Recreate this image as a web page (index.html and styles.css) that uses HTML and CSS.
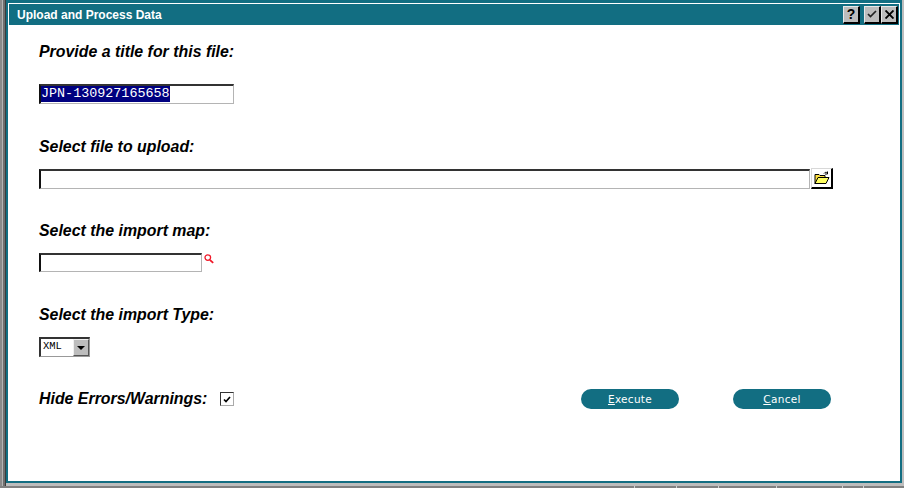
FILE: index.html
```html
<!DOCTYPE html>
<html lang="en">
<head>
    <meta charset="UTF-8">
    <title>Upload and Process Data</title>
    <link rel="stylesheet" href="styles.css">
</head>
<body>
    <div class="desktop">
        <div class="edge"></div>
        <div class="window">
            <div class="window-inner">
                <div class="title-bar">
                    <span class="title-text">Upload and Process Data</span>
                    <div class="title-buttons">
                        <button class="win-btn help-btn" type="button">?</button>
                        <button class="win-btn" type="button">
                            <svg width="10" height="8" viewBox="0 0 10 8"><path d="M1 4l2.500 2.500 5.500-5.500" fill="none" stroke="#222" stroke-width="1.700"/></svg>
                        </button>
                        <button class="win-btn" type="button">
                            <svg width="9" height="9" viewBox="0 0 9 9"><path d="M.5 .5l8 8M8.500 .5l-8 8" fill="none" stroke="#000" stroke-width="1.900"/></svg>
                        </button>
                    </div>
                </div>

                <form class="upload-form">
                    <div class="field first">
                        <label class="field-label">Provide a title for this file:</label>
                        <div class="text-box title-box"><span class="selected-text">JPN-130927165658</span></div>
                    </div>

                    <div class="field second">
                        <label class="field-label">Select file to upload:</label>
                        <div class="control-row">
                            <div class="text-box file-box"></div>
                            <button class="folder-btn" type="button">
                                <svg width="16" height="14" viewBox="0 0 16 14">
                                    <path d="M1 3.500h4l1 1h5v2H5L1 12.500z" fill="#ffe040" stroke="#000" stroke-width="1"/>
                                    <path d="M1 12.500l3-6h11l-3 6z" fill="#ffff60" stroke="#000" stroke-width="1"/>
                                    <path d="M10 2.500c1-1.500 2.500-1.500 3.500-.5M13.500 .5v2.500h-2.500" fill="none" stroke="#000" stroke-width="1"/>
                                </svg>
                            </button>
                        </div>
                    </div>

                    <div class="field">
                        <label class="field-label">Select the import map:</label>
                        <div class="map-row">
                            <div class="text-box map-box"></div>
                            <svg class="search-icon" width="10" height="10" viewBox="0 0 10 10">
                                <circle cx="3.800" cy="3.600" r="2.800" fill="none" stroke="#f01828" stroke-width="1.300"/>
                                <path d="M5.800 5.800l3.400 3" fill="none" stroke="#f01828" stroke-width="1.800"/>
                            </svg>
                        </div>
                    </div>

                    <div class="field fourth">
                        <label class="field-label">Select the import Type:</label>
                        <div class="select-box">
                            <span class="select-value">XML</span>
                            <span class="select-arrow"><span class="arrow-down"></span></span>
                        </div>
                    </div>

                    <div class="action-row">
                        <label class="field-label">Hide Errors/Warnings:</label>
                        <span class="check-box">
                            <svg width="8" height="7" viewBox="0 0 8 7"><path d="M1 3.500l2 2 4-4.500" fill="none" stroke="#000" stroke-width="1.700"/></svg>
                        </span>
                        <button class="pill-btn execute-btn" type="button"><u>E</u>xecute</button>
                        <button class="pill-btn" type="button"><u>C</u>ancel</button>
                    </div>
                </form>
            </div>
        </div>
    </div>
    <div class="status-strip">
        <span class="strip-cell grow"></span>
        <span class="strip-cell w42"></span>
        <span class="strip-cell w42"></span>
        <span class="strip-cell w58"></span>
        <span class="strip-cell w66"></span>
        <span class="strip-cell w21"></span>
        <span class="strip-cell w41"></span>
    </div>
</body>
</html>
```

FILE: styles.css
```css
:root {
    --teal: #126e82;
    --chrome: #bdbdbd;
}

html, body {
    margin: 0;
    padding: 0;
    height: 488px;
    overflow: hidden;
    background-color: var(--chrome);
}

body {
    display: flex;
    flex-direction: column;
    font-family: "Liberation Sans", Arial, sans-serif;
}

.desktop {
    display: flex;
    height: 486px;
}

/* grey stripes at the left side of the screen */
.edge {
    width: 6px;
    background: linear-gradient(90deg, #8a8a8a 0, #8a8a8a 2px, #b4b4b4 2px, #b4b4b4 3px, #6e6e6e 3px, #6e6e6e 5px, #3c3c3c 5px);
}

.window {
    width: 896px;
    height: 483px;
    box-sizing: border-box;
    border: 2px solid var(--teal);
    border-top-width: 3px;
    background-color: #fff;
}

.window-inner {
    height: 100%;
    box-sizing: border-box;
    padding: 1px 1px 0 1px;
}

/* --- Title bar --- */
.title-bar {
    display: flex;
    align-items: center;
    justify-content: space-between;
    height: 21px;
    padding: 0 1px 0 8px;
    background-color: var(--teal);
}

.title-text {
    color: #fff;
    font-size: 12px;
    font-weight: bold;
}

.title-buttons {
    display: flex;
    align-items: center;
}

.win-btn {
    display: flex;
    align-items: center;
    justify-content: center;
    width: 17px;
    height: 18px;
    padding: 0;
    box-sizing: border-box;
    background-color: var(--chrome);
    border-style: solid;
    border-width: 1px 2px 2px 1px;
    border-color: #e8e8e8 #000 #000 #e8e8e8;
}

.help-btn {
    margin-right: 4px;
    font-family: "Liberation Sans", Arial, sans-serif;
    font-size: 14px;
    font-weight: bold;
    color: #000;
}

/* --- Form --- */
.upload-form {
    padding-left: 30px;
}

.field {
    margin-top: 33px;
}

.field.first {
    margin-top: 18px;
}

.field.second {
    margin-top: 34px;
}

.field.fourth {
    margin-top: 34px;
}

.field-label {
    display: block;
    font-size: 15.900px;
    line-height: 18px;
    font-weight: bold;
    font-style: italic;
    color: #000;
}

.text-box {
    box-sizing: border-box;
    background-color: #fff;
    border-style: solid;
    border-width: 2px 1px 1px 2px;
    border-color: #333 #b4b4b4 #b4b4b4 #111;
}

.title-box {
    width: 195px;
    height: 20px;
    margin-top: 23px;
    line-height: 16px;
    font-family: "Liberation Mono", monospace;
    font-size: 13.400px;
    color: #fff;
}

.selected-text {
    display: inline-block;
    height: 16px;
    background-color: #000080;
}

.control-row {
    display: flex;
    align-items: center;
    margin-top: 12px;
}

.file-box {
    width: 771px;
    height: 20px;
}

.folder-btn {
    display: flex;
    align-items: center;
    justify-content: center;
    width: 22px;
    height: 21px;
    margin-left: 1px;
    padding: 0;
    box-sizing: border-box;
    background-color: #fff;
    border-style: solid;
    border-width: 1px 2px 2px 1px;
    border-color: #d8d8d8 #000 #000 #d8d8d8;
}

.map-row {
    display: flex;
    align-items: flex-start;
    margin-top: 13px;
}

.map-box {
    width: 163px;
    height: 19px;
}

.search-icon {
    margin-left: 2px;
    margin-top: 1px;
}

.select-box {
    display: flex;
    width: 51px;
    height: 20px;
    margin-top: 13px;
    box-sizing: border-box;
    border-style: solid;
    border-width: 2px 1px 1px 2px;
    border-color: #333 #999 #999 #333;
    background-color: #fff;
}

.select-value {
    flex: 1;
    padding-left: 2px;
    font-family: "Liberation Mono", monospace;
    font-size: 10.500px;
    line-height: 15px;
    color: #000;
}

.select-arrow {
    display: flex;
    align-items: center;
    justify-content: center;
    width: 16px;
    box-sizing: border-box;
    background-color: var(--chrome);
    border: 1px solid;
    border-color: #f0f0f0 #555 #555 #f0f0f0;
}

.arrow-down {
    width: 0;
    height: 0;
    border-left: 4px solid transparent;
    border-right: 4px solid transparent;
    border-top: 4px solid #000;
}

/* --- Bottom row --- */
.action-row {
    display: flex;
    align-items: center;
    width: 792px;
    height: 20px;
    margin-top: 32px;
}

.check-box {
    display: flex;
    align-items: center;
    justify-content: center;
    width: 14px;
    height: 14px;
    margin-left: 13px;
    box-sizing: border-box;
    border: 1px solid;
    border-color: #333 #aaa #aaa #333;
}

.pill-btn {
    width: 98px;
    height: 20px;
    margin-left: 54px;
    padding: 0;
    border: none;
    border-radius: 10px;
    background-color: var(--teal);
    color: #fff;
    font-family: "DejaVu Sans", sans-serif;
    font-size: 10.500px;
    letter-spacing: 0.300px;
}

.execute-btn {
    margin-left: auto;
}

/* --- Strip under the window --- */
.status-strip {
    display: flex;
    height: 2px;
}

.strip-cell {
    box-sizing: border-box;
    background-color: #808080;
    border-left: 1px solid #d0d0d0;
}

.strip-cell.grow { flex: 1; border-left: none; }
.w42 { width: 42px; }
.w58 { width: 58px; }
.w66 { width: 66px; }
.w21 { width: 21px; }
.w41 { width: 41px; }
```
